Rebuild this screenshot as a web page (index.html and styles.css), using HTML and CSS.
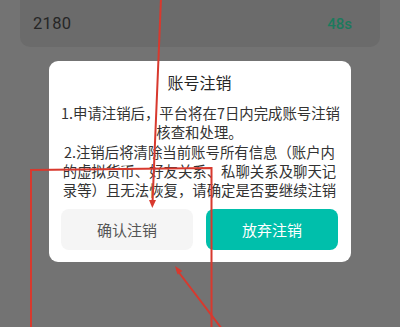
FILE: index.html
```html
<!DOCTYPE html>
<html lang="zh-CN">
<head>
<meta charset="utf-8">
<title>账号注销</title>
<link rel="stylesheet" href="styles.css">
</head>
<body>
<div class="screen">
  <div class="code-card">
    <span class="code">2180</span>
    <span class="timer">48s</span>
  </div>
  <div class="dialog">
    <div class="dialog-title">账号注销</div>
    <div class="dialog-body">
      <p class="para"><span class="line">1.申请注销后，平台将在7日内完成账号注销</span><span class="line">核查和处理。</span></p>
      <p class="para"><span class="line">2.注销后将清除当前账号所有信息（账户内</span><span class="line">的虚拟货币、好友关系、私聊关系及聊天记</span><span class="line">录等）且无法恢复，请确定是否要继续注销</span></p>
    </div>
    <div class="dialog-actions">
      <button class="btn btn-confirm">确认注销</button>
      <button class="btn btn-cancel">放弃注销</button>
    </div>
  </div>
  <svg class="marks" width="400" height="327" viewBox="0 0 400 327">
    <g stroke="#d8392e" stroke-width="2" fill="none" stroke-linecap="round">
      <line x1="161" y1="-2" x2="152.5" y2="203"/>
      <polyline points="31,329 31,170 211.5,168 211.5,329"/>
      <line x1="222" y1="329" x2="177" y2="270"/>
    </g>
    <g fill="#d8392e">
      <polygon points="149,200 156,200 152.3,208"/>
      <polygon points="175,266 182.5,271 177.5,274.5"/>
    </g>
  </svg>
</div>
</body>
</html>
```
FILE: styles.css
```css
html, body {
  margin: 0;
  padding: 0;
}
body {
  width: 400px;
  height: 327px;
  overflow: hidden;
  background: #737373;
  font-family: Roboto, "Noto Sans CJK SC", "Noto Sans", sans-serif;
}
.screen {
  position: relative;
  width: 400px;
  height: 327px;
  display: flex;
  flex-direction: column;
}
.code-card {
  margin: 0 20px;
  height: 47px;
  background: #6b6b6b;
  border-radius: 0 0 10px 10px;
  display: flex;
  align-items: center;
  justify-content: space-between;
  padding: 0 28px 0 13px;
}
.code {
  font-size: 16.5px;
  color: #262626;
  letter-spacing: 0.3px;
}
.timer {
  font-size: 15px;
  font-weight: 500;
  color: #1c7a5d;
}
.dialog {
  margin: 14px 0 0 49px;
  width: 302px;
  background: #ffffff;
  border-radius: 9px;
  padding: 11px 13px 12px 12px;
  box-sizing: border-box;
  font-family: "Noto Sans CJK SC", sans-serif;
}
.dialog-title {
  text-align: center;
  font-size: 16px;
  line-height: 20px;
  color: #262626;
}
.dialog-body {
  margin-top: 11px;
  color: #333333;
  font-size: 14.4px;
  line-height: 19.3px;
  text-align: center;
}
.para {
  margin: 0;
}
.line {
  display: block;
  white-space: nowrap;
}
.dialog-actions {
  margin-top: 10px;
  display: flex;
  gap: 13px;
}
.btn {
  flex: 1;
  height: 41px;
  border: none;
  border-radius: 8px;
  font-family: "Noto Sans CJK SC", sans-serif;
  font-size: 15px;
  padding: 0;
}
.btn-confirm {
  background: #f5f5f5;
  color: #555555;
}
.btn-cancel {
  background: #00bfab;
  color: #ffffff;
}
.marks {
  position: absolute;
  left: 0;
  top: 0;
  pointer-events: none;
}
```
